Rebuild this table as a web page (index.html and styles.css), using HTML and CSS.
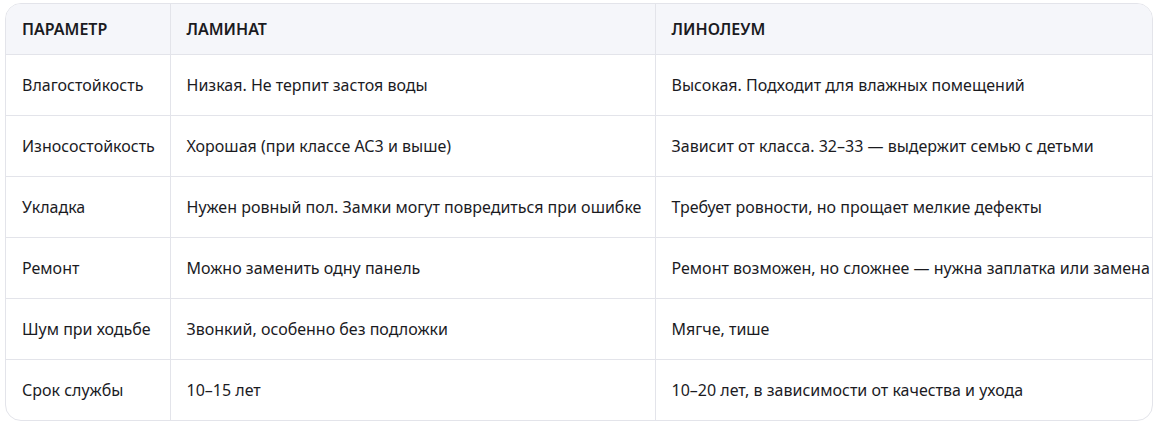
FILE: index.html
```
<!DOCTYPE html>
<html lang="ru">
<head>
<meta charset="utf-8">
<link rel="stylesheet" href="styles.css">
</head>
<body>
<div class="wrap">
<table class="cmp">
<colgroup><col class="c1"><col class="c2"><col class="c3"></colgroup>
<thead>
<tr><th>Параметр</th><th>Ламинат</th><th>Линолеум</th></tr>
</thead>
<tbody>
<tr><td>Влагостойкость</td><td>Низкая. Не терпит застоя воды</td><td>Высокая. Подходит для влажных помещений</td></tr>
<tr><td>Износостойкость</td><td>Хорошая (при классе АС3 и выше)</td><td>Зависит от класса. 32–33 — выдержит семью с детьми</td></tr>
<tr><td>Укладка</td><td>Нужен ровный пол. Замки могут повредиться при ошибке</td><td>Требует ровности, но прощает мелкие дефекты</td></tr>
<tr><td>Ремонт</td><td>Можно заменить одну панель</td><td>Ремонт возможен, но сложнее — нужна заплатка или замена</td></tr>
<tr><td>Шум при ходьбе</td><td>Звонкий, особенно без подложки</td><td>Мягче, тише</td></tr>
<tr><td>Срок службы</td><td>10–15 лет</td><td>10–20 лет, в зависимости от качества и ухода</td></tr>
</tbody>
</table>
</div>
</body>
</html>
```
FILE: styles.css
```
html, body { margin: 0; padding: 0; background: #fff; }
body {
  padding: 3px 5px 0 5px;
  font-family: "Noto Sans", "Open Sans", sans-serif;
  color: #1b1b1f;
}
.wrap {
  width: 1146px;
  border: 1px solid #e3e4ea;
  border-radius: 16px;
  overflow: hidden;
}
.cmp {
  border-collapse: collapse;
  table-layout: fixed;
  width: 1160px;
  font-size: 16px;
}
.c1 { width: 164px; }
.c2 { width: 485px; }
.c3 { width: 511px; }
.cmp th, .cmp td {
  padding: 0 16px;
  text-align: left;
  white-space: nowrap;
  border-left: 1px solid #e3e4ea;
  border-top: 1px solid #e3e4ea;
}
.cmp th:first-child, .cmp td:first-child { border-left: none; }
.cmp thead th {
  border-top: none;
  height: 50px;
  background: #f5f6fa;
  font-weight: 600;
  font-size: 16px;
  text-transform: uppercase;
}
.cmp td { height: 60px; }
```
